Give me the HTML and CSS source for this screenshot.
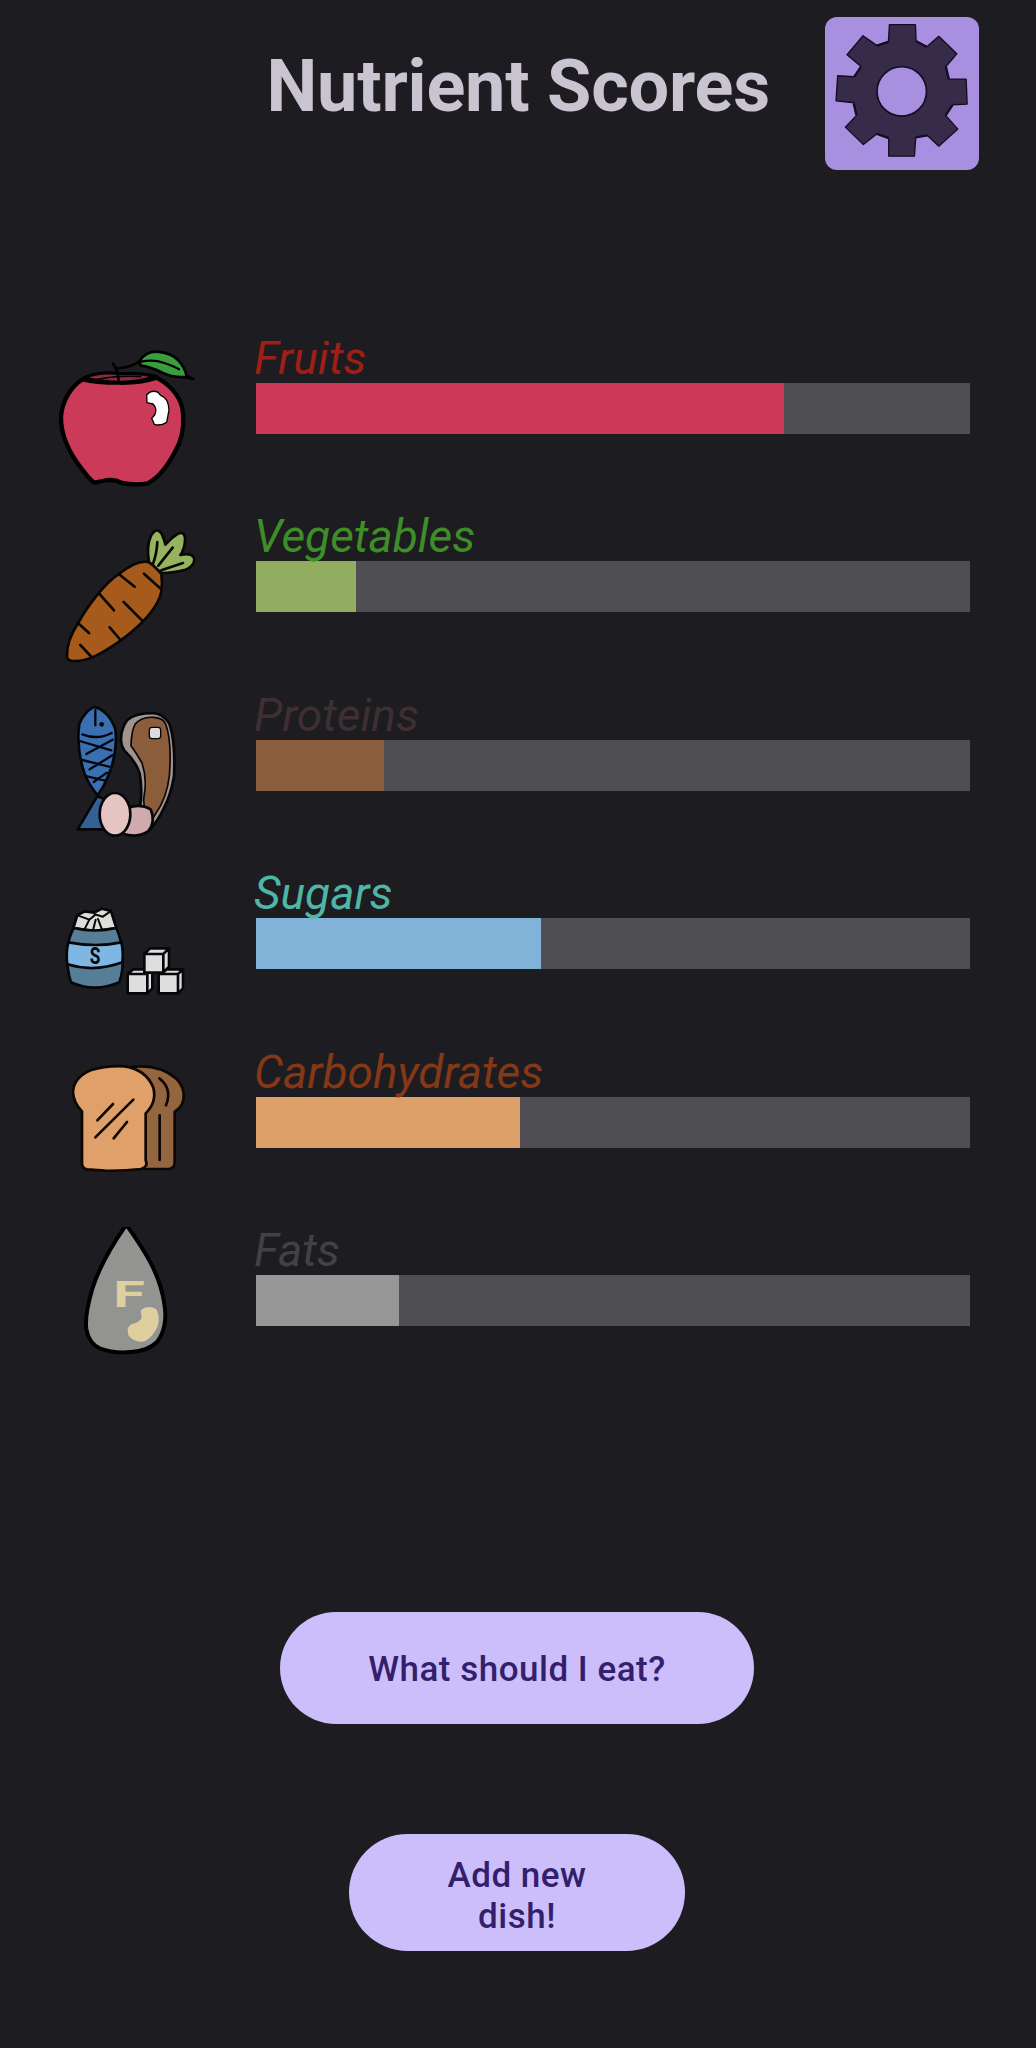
FILE: index.html
```html
<!DOCTYPE html>
<html lang="en">
<head>
<meta charset="utf-8">
<title>Nutrient Scores</title>
<link rel="stylesheet" href="styles.css">
</head>
<body>
<header class="header">
  <h1 class="title">Nutrient Scores</h1>
  <button class="settings" aria-label="Settings">
    <svg viewBox="76 50 460 460" stroke="#160c24" stroke-width="4" stroke-linejoin="round">
      <path fill="#362b48" d="M269 73H347L349 122L381 139L417 108L471 160L438 199L447 236L499 236L502 311L459 313L437 344L474 386L417 437L383 405L348 411L344 467H267V414L232 400L191 432L137 380L171 344L163 307L109 301L114 226L163 229L184 198L142 163L190 106L231 135L266 124Z"/>
      <path fill="none" stroke-width="7" d="M232 136L268 124M348 122L380 139M438 198L447 236M458 314L438 344M383 405L348 411M267 413L232 400M170 344L162 309M164 229L183 200"/>
      <circle cx="306" cy="273" r="74" fill="#a98fdf" stroke-width="5"/>
    </svg>
  </button>
</header>

<main class="scores">
  <section class="row fruits">
    <svg class="icon" viewBox="2 0 510 495" stroke="#000" stroke-width="13" stroke-linejoin="round" stroke-linecap="round">
      <path fill="#cc3a5a" d="M130 133C100 150 68 195 65 245C64 310 98 365 130 405Q150 432 165 443L190 438Q222 430 248 444Q290 452 325 445C360 428 384 394 406 352C427 318 434 275 431 237C430 195 400 154 352 128Q300 145 235 143Q170 143 130 133Z"/>
      <path fill="#8f2941" stroke-width="10" d="M134 128Q180 108 240 116Q300 112 350 124Q300 143 237 142Q175 141 134 128Z"/>
      <path fill="none" stroke-width="5" d="M156 137Q230 120 304 125"/>
      <path fill="none" stroke-width="8" d="M238 137Q236 106 221 86M235 100Q280 97 305 76"/>
      <path fill="#3b9d3d" stroke-width="8" d="M302 77Q319 49 354 50Q397 54 417 76Q435 94 442 123L462 132L436 126Q400 128 367 112Q336 96 302 91Z"/>
      <path fill="none" stroke-width="7" d="M305 80Q342 72 375 84Q405 94 419 103"/>
      <path fill="#fff" stroke-width="4" d="M322 180Q335 164 355 171L364 181Q387 188 389 225L382 262Q363 274 345 268L337 250L346 240Q355 221 341 207L323 203Z"/>
    </svg>
    <div class="info">
      <h2 class="label">Fruits</h2>
      <div class="track"><div class="fill" style="width:74%"></div></div>
    </div>
  </section>

  <section class="row vegetables">
    <svg class="icon" viewBox="1 -5 510 495" stroke="#090604" stroke-width="8" stroke-linejoin="round" stroke-linecap="round">
      <path fill="#96b45f" d="M328 143Q319 94 335 61Q352 35 366 57Q375 77 377 90Q395 69 415 57Q438 48 436 79Q434 105 422 121Q455 113 464 131Q465 154 437 165Q405 174 365 175L343 158Z"/>
      <path fill="none" d="M353 82Q351 119 340 147M399 99L356 153M430 145L365 167"/>
      <path fill="#a65a1b" d="M82 428C80 392 95 355 118 321C139 281 192 208 238 178C274 150 307 135 330 144Q353 162 365 178C369 208 370 239 351 267C323 317 273 356 235 383C194 411 145 443 99 439Q85 437 82 428Z"/>
      <path fill="none" stroke-width="8" d="M240 180L285 216M313 177L364 223M178 236L223 287M252 262L307 317M114 324L148 355M210 338L240 373M122 391L153 424"/>
    </svg>
    <div class="info">
      <h2 class="label">Vegetables</h2>
      <div class="track"><div class="fill" style="width:14%"></div></div>
    </div>
  </section>

  <section class="row proteins">
    <svg class="icon" viewBox="0 4 510 495" stroke="#05060a" stroke-width="8" stroke-linejoin="round" stroke-linecap="round">
      <path fill="#336196" d="M172 316L113 416H204V330Z"/>
      <path fill="#3a70b2" d="M163 48Q132 64 118 100C110 155 119 205 133 247Q146 282 173 314Q194 285 207 250C225 206 231 151 226 116Q208 62 163 48Z"/>
      <path fill="none" stroke-width="7" d="M166 57V104M127 131Q172 149 215 127M119 151L214 179M218 147L139 190M126 208L207 228M217 194L149 236M141 257L193 269M201 246L161 274"/>
      <circle cx="185" cy="101" r="3" fill="#05060a"/>
      <path fill="#a0948f" d="M243 145Q243 114 262 88Q286 67 339 67Q370 70 388 99C401 134 405 190 402 256Q394 309 371 354Q355 389 332 414Q307 410 300 350Q308 300 299 248Q288 213 253 179Q242 164 243 145Z"/>
      <path fill="#8b5d3b" stroke-width="5" d="M285 101Q305 77 342 80Q371 82 378 102Q393 148 390 220Q390 290 362 345L339 382Q306 360 312 318Q322 265 306 217Q291 190 273 165Q274 122 285 101Z"/>
      <rect x="328" y="110" width="34" height="34" rx="8" fill="#ddd" stroke-width="4"/>
      <path fill="#d0abad" d="M264 352Q300 337 332 356Q348 398 324 422Q290 443 249 429Z"/>
      <ellipse cx="225" cy="371" rx="46" ry="64" fill="#e6c4c1"/>
    </svg>
    <div class="info">
      <h2 class="label">Proteins</h2>
      <div class="track"><div class="fill" style="width:18%"></div></div>
    </div>
  </section>

  <section class="row sugars">
    <svg class="icon" viewBox="1 -29 510 495" stroke="#060708" stroke-width="8" stroke-linejoin="round" stroke-linecap="round">
      <path fill="#deddda" d="M101 145L113 106L136 95L164 99L187 87L214 94L230 145L165 154Z"/>
      <path fill="none" stroke-width="6" d="M114 107L149 120L166 106L163 99M149 120L134 150M165 104L190 111L212 95M168 120L160 152M175 118L187 150"/>
      <path fill="#587d97" d="M102 145Q164 160 230 145Q248 185 249 230Q251 275 239 308Q164 340 94 308Q80 263 82 218Q84 178 102 145Z"/>
      <path fill="#7fb7e4" d="M86 188Q170 204 245 188Q252 216 248 248Q165 279 83 254Q78 220 86 188Z"/>
      <text class="barrel-letter" transform="translate(166 252) scale(.72 1)" text-anchor="middle" stroke="none">S</text>
      <g fill="#dedede">
        <path d="M264 283L281 269H338V326L323 341H264ZM264 283H323V341M323 283L338 269"/>
        <path d="M357 283L376 269H430V326L415 341H357ZM357 283H415V341M415 283L430 269"/>
        <path d="M314 223L331 206H388V261L371 279H314ZM314 223H371V279M371 223L388 206"/>
      </g>
    </svg>
    <div class="info">
      <h2 class="label">Sugars</h2>
      <div class="track"><div class="fill" style="width:40%"></div></div>
    </div>
  </section>

  <section class="row carbohydrates">
    <svg class="icon" viewBox="1 26 510 495" stroke="#0e0704" stroke-width="8" stroke-linejoin="round" stroke-linecap="round">
      <path fill="#936640" d="M275 80Q358 70 410 115Q438 145 431 178Q427 200 405 214V370Q402 385 385 386H315V215Z"/>
      <path fill="#dfa069" d="M127 213Q102 188 100 156Q102 110 155 89Q200 75 255 78Q320 88 341 142Q352 186 318 219V360Q327 379 304 386Q254 392 195 391L142 387Q128 385 127 370Z"/>
      <path fill="none" stroke-width="8" d="M220 191L173 240M281 178L167 291M262 245L222 294M359 114Q399 145 379 195M360 225V359"/>
    </svg>
    <div class="info">
      <h2 class="label">Carbohydrates</h2>
      <div class="track"><div class="fill" style="width:37%"></div></div>
    </div>
  </section>

  <section class="row fats">
    <svg class="icon" viewBox="1 52 510 495" stroke="#000" stroke-width="12" stroke-linejoin="round">
      <path fill="#939492" d="M260 45C217 106 180 168 158 237C142 292 136 330 140 358Q147 400 180 416Q223 432 274 427Q325 424 352 397C374 370 382 325 374 283C361 188 307 112 260 45Z"/>
      <g fill="#dfce9e" stroke="none">
        <path d="M303 302Q324 284 350 299Q362 320 354 350Q339 383 315 395Q285 400 267 378Q258 354 275 344Q300 338 306 324Z"/>
        <text class="drop-letter" transform="translate(221 291) scale(1.6 1)">F</text>
      </g>
    </svg>
    <div class="info">
      <h2 class="label">Fats</h2>
      <div class="track"><div class="fill" style="width:20%"></div></div>
    </div>
  </section>
</main>

<footer class="actions">
  <button class="action suggest">What should I eat?</button>
  <button class="action add">Add new<br>dish!</button>
</footer>
</body>
</html>
```
FILE: styles.css
```css
* {
  box-sizing: border-box;
}

body {
  margin: 0;
  min-height: 2048px;
  background: #1d1c20;
  font-family: Roboto, "Liberation Sans", sans-serif;
}

button {
  border: 0;
  padding: 0;
  font: inherit;
}

.header {
  display: flex;
  justify-content: space-between;
  height: 335px;
  padding: 16.5px 57.5px 0 266.5px;
}

.title {
  margin: 28px 0 0;
  color: #cac4d0;
  font-size: 72px;
  font-weight: 700;
  line-height: 84px;
  letter-spacing: -0.2px;
  white-space: nowrap;
}

.settings {
  width: 153.5px;
  height: 153.5px;
  border-radius: 12px;
  background: #a98fdf;
}

.settings svg {
  display: block;
  width: 100%;
  height: 100%;
}

.row {
  display: flex;
  gap: 46px;
  height: 178.45px;
  padding: 0 66.5px 0 40px;
}

.icon {
  flex: none;
  width: 170px;
  height: 165px;
}

.info {
  flex: 1;
}

.label {
  margin: 0 0 0 -2px;
  padding-top: 1px;
  padding-bottom: 1.2px;
  font-size: 46px;
  font-style: italic;
  font-weight: 400;
  line-height: 45.6px;
}

.track {
  height: 51.2px;
  background: #4f4e53;
}

.fill {
  height: 100%;
}

.fruits .label { color: #9f1f17; }
.fruits .fill { background: #cc3958; }
.vegetables .label { color: #3f8d28; }
.vegetables .fill { background: #92ac60; }
.proteins .label { color: #3e2f30; }
.proteins .fill { background: #8a5d3d; }
.sugars .label { color: #4fb5a6; }
.sugars .fill { background: #81b2d8; }
.carbohydrates .label { color: #853817; }
.carbohydrates .fill { background: #dea069; }
.fats .label { color: #424246; }
.fats .fill { background: #969696; }

.barrel-letter {
  fill: #060708;
  font: 700 72px Roboto, sans-serif;
}

.drop-letter {
  font: 700 108px Roboto, sans-serif;
}

.actions {
  display: flex;
  flex-direction: column;
  align-items: center;
  gap: 109.5px;
  padding: 206.3px 2px 0 0;
}

.action {
  border-radius: 60px;
  background: #ccbefb;
  color: #341f6c;
  font-size: 35px;
  font-weight: 500;
  line-height: 41.5px;
  letter-spacing: 0.5px;
}

.suggest {
  width: 474px;
  height: 112.2px;
  padding-top: 4px;
}

.add {
  width: 336px;
  height: 117px;
  padding-top: 8px;
}
```
